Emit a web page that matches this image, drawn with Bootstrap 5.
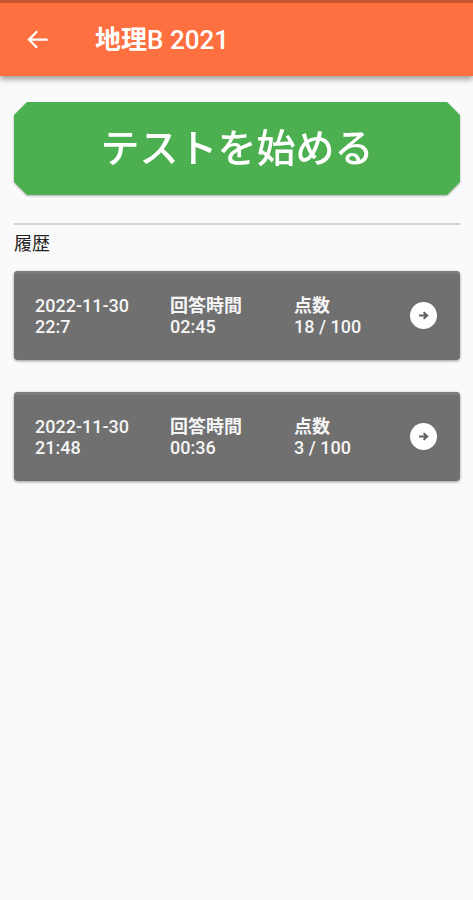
<!DOCTYPE html>
<html lang="ja">
<head>
<meta charset="utf-8">
<meta name="viewport" content="width=device-width, initial-scale=1">
<title>地理B 2021</title>
<link href="https://cdn.jsdelivr.net/npm/bootstrap@5.3.0/dist/css/bootstrap.min.css" rel="stylesheet">
<style>
  body { background: #fafafa; font-family: Roboto, "Noto Sans CJK JP", sans-serif; color: #222; }
  .app-header { background: #ff7040; border-top: 3px solid #c4532f; height: 76px; padding: 0 24px; gap: 44px; box-shadow: 0 3px 6px rgba(0,0,0,.4); }
  .app-title { font-size: 26px; line-height: 32px; font-weight: 500; }
  .back-btn { width: 27px; height: 27px; }
  .page-body { padding: 26px 13px 26px 14px; }
  .start-wrap { filter: drop-shadow(0 1px 1px rgba(0,0,0,.3)); }
  .start-btn { background: #4caf50; height: 93px; font-size: 39px; line-height: 48px; font-weight: 500; border-radius: 0;
    clip-path: polygon(13px 0, calc(100% - 13px) 0, 100% 13px, 100% calc(100% - 13px), calc(100% - 13px) 100%, 13px 100%, 0 calc(100% - 13px), 0 13px); }
  .start-btn:hover { background: #43a047; }
  .rule { border-top: 2px solid #d2d2d2; opacity: 1; margin: 28px 0 8px; }
  .history-title { font-size: 18px; line-height: 22px; font-weight: 400; margin-bottom: 16px; }
  .history-list { gap: 32px; }
  .history-item { display: grid; grid-template-columns: 135fr 124fr 116fr 27px; align-items: center; height: 89px; padding: 0 23px 0 21px;
    background: #707070; border-radius: 4px; color: #f5f5f5; font-size: 18px; line-height: 21px; font-weight: 500;
    box-shadow: inset 0 3px 1px #7d7d7d, 0 1px 3px rgba(0,0,0,.4); }
  .history-item:hover { color: #fff; background: #686868; }
</style>
<script src="https://cdn.jsdelivr.net/npm/bootstrap@5.3.0/dist/js/bootstrap.bundle.min.js" defer></script>
</head>
<body>
<header class="app-header d-flex align-items-center text-white">
  <button type="button" class="back-btn btn p-0 border-0 text-white d-flex" aria-label="戻る">
    <svg width="27" height="27" viewBox="0 0 24 24" fill="currentColor" aria-hidden="true"><path d="M21 11H6.83l5.58-5.59L11 4l-8 8 8 8 1.41-1.41L6.83 13H21z"/></svg>
  </button>
  <h1 class="app-title m-0"><span class="fw-bold">地理</span>B 2021</h1>
</header>
<main class="page-body">
  <div class="start-wrap">
    <button type="button" class="start-btn btn w-100 p-0 border-0 text-white">テストを始める</button>
  </div>
  <hr class="rule">
  <h2 class="history-title">履歴</h2>
  <div class="history-list d-flex flex-column">
    <a href="#result-1" class="history-item text-decoration-none">
      <span>2022-11-30<br>22:7</span>
      <span><span class="fw-bold">回答時間</span><br>02:45</span>
      <span><span class="fw-bold">点数</span><br>18 / 100</span>
      <svg width="27" height="27" viewBox="0 0 27 27" aria-hidden="true"><circle cx="13.5" cy="13.5" r="13.5" fill="#fff"/><path d="M9 13.5h7.5M13.6 10.2l3.6 3.3-3.6 3.3" fill="none" stroke="#606060" stroke-width="2"/></svg>
    </a>
    <a href="#result-2" class="history-item text-decoration-none">
      <span>2022-11-30<br>21:48</span>
      <span><span class="fw-bold">回答時間</span><br>00:36</span>
      <span><span class="fw-bold">点数</span><br>3 / 100</span>
      <svg width="27" height="27" viewBox="0 0 27 27" aria-hidden="true"><circle cx="13.5" cy="13.5" r="13.5" fill="#fff"/><path d="M9 13.5h7.5M13.6 10.2l3.6 3.3-3.6 3.3" fill="none" stroke="#606060" stroke-width="2"/></svg>
    </a>
  </div>
</main>
</body>
</html>
